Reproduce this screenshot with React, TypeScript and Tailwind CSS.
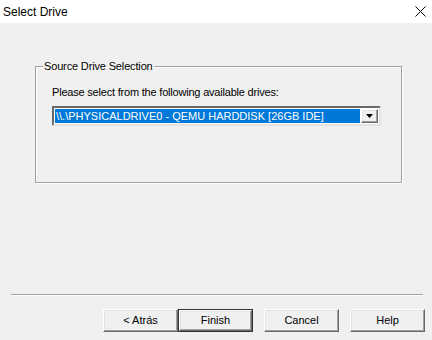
const raised =
  'border border-t-white border-l-white border-b-[#696969] border-r-[#696969] shadow-[inset_-1px_-1px_0_#a0a0a0,inset_1px_1px_0_#e3e3e3]';

const DialogButton = ({ label, isDefault = false }: { label: string; isDefault?: boolean }) => {
  if (isDefault) {
    return (
      <div className="w-[75px] h-[23px] border border-[#333] bg-[#f0f0f0]">
        <div className={`h-full w-full flex items-center justify-center text-[11px] text-black bg-[#f0f0f0] ${raised}`}>
          {label}
        </div>
      </div>
    );
  }
  return (
    <div className={`w-[75px] h-[23px] flex items-center justify-center text-[11px] text-black bg-[#f0f0f0] ${raised}`}>
      {label}
    </div>
  );
};

const App = () => {
  return (
    <div className="w-[432px] h-[340px] flex flex-col bg-[#f0f0f0] font-['Liberation_Sans',Arial,sans-serif] overflow-hidden">
      {/* Title bar */}
      <div className="h-[23px] bg-white flex items-center justify-between pl-[3px] pr-[5px] shrink-0">
        <span className="text-[12px] text-black">Select Drive</span>
        <svg width="11" height="11" viewBox="0 0 11 11" className="mr-[1px]">
          <path d="M0.5 0.5 L10.5 10.5 M10.5 0.5 L0.5 10.5" stroke="#000" strokeWidth="1" />
        </svg>
      </div>

      {/* Body */}
      <div className="flex-1 flex flex-col">
        {/* Group box */}
        <fieldset className="ml-[35px] mt-[37px] w-[367px] h-[123px] border border-[#a0a0a0] shadow-[1px_1px_0_#fff,inset_1px_1px_0_#fff] px-[16px]">
          <legend className="ml-[-9px] px-[1px] text-[11px] text-black leading-[13px] tracking-[-0.15px]">Source Drive Selection</legend>
          <div className="mt-[13px] text-[11px] text-black leading-[13px] tracking-[-0.2px]">
            Please select from the following available drives:
          </div>
          <div className="mt-[7px] w-[329px] h-[20px] border-2 border-t-[#696969] border-l-[#696969] border-b-[#e3e3e3] border-r-[#e3e3e3] bg-white flex p-[1px]">
            <div className="flex-1 bg-[#0078d7] text-white text-[11px] leading-[14px] pl-[1px] flex items-center">
              \\.\PHYSICALDRIVE0 - QEMU HARDDISK [26GB IDE]
            </div>
            <div className={`w-[17px] h-full bg-[#f0f0f0] flex items-center justify-center ml-[1px] ${raised}`}>
              <svg width="7" height="4" viewBox="0 0 7 4">
                <path d="M0 0 H7 L3.5 4 Z" fill="#000" />
              </svg>
            </div>
          </div>
        </fieldset>

        <div className="flex-1" />

        {/* Separator */}
        <div className="mx-[11px] mr-[9px] h-[2px] border-t border-[#a0a0a0] border-b border-b-white" />

        {/* Buttons */}
        <div className="flex justify-end pr-[7px] mt-[13px] mb-[8px]">
          <DialogButton label="< Atrás" />
          <DialogButton label="Finish" isDefault />
          <div className="w-[11px]" />
          <DialogButton label="Cancel" />
          <div className="w-[11px]" />
          <DialogButton label="Help" />
        </div>
      </div>
    </div>
  );
};

export default App;
